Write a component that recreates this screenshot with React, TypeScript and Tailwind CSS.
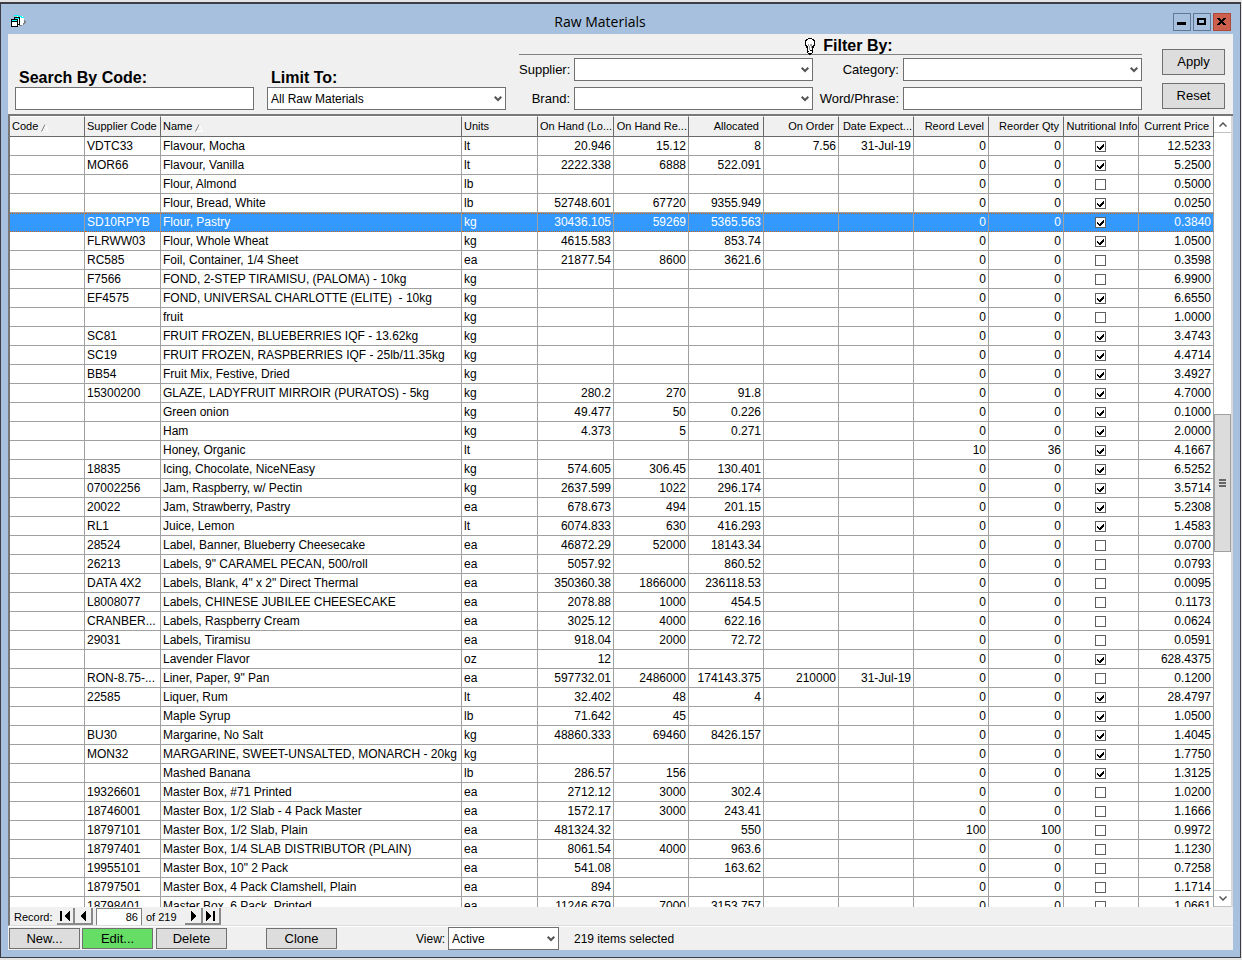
/**
 * @file Raw Materials — inventory browser window with search, filters,
 * a record grid and record actions.
 */

import { useState, type ReactNode } from "react";
import clsx from "clsx";

interface Material {
  supplierCode: string;
  name: string;
  units: string;
  onHandLo: string;
  onHandRe: string;
  allocated: string;
  onOrder: string;
  expected: string;
  level: string;
  qty: string;
  nutrition: boolean;
  price: string;
}

// supplier code | name | units | on hand | on hand re | allocated | on order | expected | level | qty | nutrition | price
const SOURCE = `VDTC33|Flavour, Mocha|lt|20.946|15.12|8|7.56|31-Jul-19|0|0|1|12.5233
MOR66|Flavour, Vanilla|lt|2222.338|6888|522.091|||0|0|1|5.2500
|Flour, Almond|lb||||||0|0|0|0.5000
|Flour, Bread, White|lb|52748.601|67720|9355.949|||0|0|1|0.0250
SD10RPYB|Flour, Pastry|kg|30436.105|59269|5365.563|||0|0|1|0.3840
FLRWW03|Flour, Whole Wheat|kg|4615.583||853.74|||0|0|1|1.0500
RC585|Foil, Container, 1/4 Sheet|ea|21877.54|8600|3621.6|||0|0|0|0.3598
F7566|FOND, 2-STEP TIRAMISU, (PALOMA) - 10kg|kg||||||0|0|0|6.9900
EF4575|FOND, UNIVERSAL CHARLOTTE (ELITE)  - 10kg|kg||||||0|0|1|6.6550
|fruit|kg||||||0|0|0|1.0000
SC81|FRUIT FROZEN, BLUEBERRIES IQF - 13.62kg|kg||||||0|0|1|3.4743
SC19|FRUIT FROZEN, RASPBERRIES IQF - 25lb/11.35kg|kg||||||0|0|1|4.4714
BB54|Fruit Mix, Festive, Dried|kg||||||0|0|1|3.4927
15300200|GLAZE, LADYFRUIT MIRROIR (PURATOS) - 5kg|kg|280.2|270|91.8|||0|0|1|4.7000
|Green onion|kg|49.477|50|0.226|||0|0|1|0.1000
|Ham|kg|4.373|5|0.271|||0|0|1|2.0000
|Honey, Organic|lt||||||10|36|1|4.1667
18835|Icing, Chocolate, NiceNEasy|kg|574.605|306.45|130.401|||0|0|1|6.5252
07002256|Jam, Raspberry, w/ Pectin|kg|2637.599|1022|296.174|||0|0|1|3.5714
20022|Jam, Strawberry, Pastry|ea|678.673|494|201.15|||0|0|1|5.2308
RL1|Juice, Lemon|lt|6074.833|630|416.293|||0|0|1|1.4583
28524|Label, Banner, Blueberry Cheesecake|ea|46872.29|52000|18143.34|||0|0|0|0.0700
26213|Labels, 9" CARAMEL PECAN, 500/roll|ea|5057.92||860.52|||0|0|0|0.0793
DATA 4X2|Labels, Blank, 4" x 2" Direct Thermal|ea|350360.38|1866000|236118.53|||0|0|0|0.0095
L8008077|Labels, CHINESE JUBILEE CHEESECAKE|ea|2078.88|1000|454.5|||0|0|0|0.1173
CRANBER...|Labels, Raspberry Cream|ea|3025.12|4000|622.16|||0|0|0|0.0624
29031|Labels, Tiramisu|ea|918.04|2000|72.72|||0|0|0|0.0591
|Lavender Flavor|oz|12|||||0|0|1|628.4375
RON-8.75-...|Liner, Paper, 9" Pan|ea|597732.01|2486000|174143.375|210000|31-Jul-19|0|0|0|0.1200
22585|Liquer, Rum|lt|32.402|48|4|||0|0|1|28.4797
|Maple Syrup|lb|71.642|45||||0|0|1|1.0500
BU30|Margarine, No Salt|kg|48860.333|69460|8426.157|||0|0|1|1.4045
MON32|MARGARINE, SWEET-UNSALTED, MONARCH - 20kg|kg||||||0|0|1|1.7750
|Mashed Banana|lb|286.57|156||||0|0|1|1.3125
19326601|Master Box, #71 Printed|ea|2712.12|3000|302.4|||0|0|0|1.0200
18746001|Master Box, 1/2 Slab - 4 Pack Master|ea|1572.17|3000|243.41|||0|0|0|1.1666
18797101|Master Box, 1/2 Slab, Plain|ea|481324.32||550|||100|100|0|0.9972
18797401|Master Box, 1/4 SLAB DISTRIBUTOR (PLAIN)|ea|8061.54|4000|963.6|||0|0|0|1.1230
19955101|Master Box, 10" 2 Pack|ea|541.08||163.62|||0|0|0|0.7258
18797501|Master Box, 4 Pack Clamshell, Plain|ea|894|||||0|0|0|1.1714
18798401|Master Box, 6 Pack, Printed|ea|11246.679|7000|3153.757|||0|0|0|1.0661`;

const MATERIALS: Material[] = SOURCE.split("\n").map((line) => {
  const f = line.split("|");
  return {
    supplierCode: f[0],
    name: f[1],
    units: f[2],
    onHandLo: f[3],
    onHandRe: f[4],
    allocated: f[5],
    onOrder: f[6],
    expected: f[7],
    level: f[8],
    qty: f[9],
    nutrition: f[10] === "1",
    price: f[11],
  };
});

const COLUMNS = [
  { title: "Code", width: "w-[75px]", align: "text-left", sorted: true },
  { title: "Supplier Code", width: "w-[76px]", align: "text-left" },
  { title: "Name", width: "", align: "text-left", sorted: true },
  { title: "Units", width: "w-[76px]", align: "text-left" },
  { title: "On Hand (Lo...", width: "w-[76px]", align: "text-right", cut: true },
  { title: "On Hand Re...", width: "w-[75px]", align: "text-right", cut: true },
  { title: "Allocated", width: "w-[75px]", align: "text-right" },
  { title: "On Order", width: "w-[75px]", align: "text-right" },
  { title: "Date Expect...", width: "w-[75px]", align: "text-right", cut: true },
  { title: "Reord Level", width: "w-[75px]", align: "text-right" },
  { title: "Reorder Qty", width: "w-[75px]", align: "text-right" },
  { title: "Nutritional Info", width: "w-[75px]", align: "text-center" },
  { title: "Current Price", width: "w-[75px]", align: "text-right" },
];

function AppIcon() {
  return (
    <svg width="16" height="14" viewBox="0 0 16 14" shapeRendering="crispEdges">
      <path d="M6 1h6v1h1v8H9v1H7z" fill="#fff" />
      <path d="M3 0h5v1H3zM7 1h4v1H7zM10 2h3v1h-3z" fill="#0ff" />
      <path d="M8 10h3v1H8zM12 8h1v2h-1zM13 5h1v4h-1zM14 6h1v2h-1z" fill="#808080" />
      <path d="M3 2h6v8H3z" fill="#000" />
      <path d="M4 4h4v5H4z" fill="#fff" />
      <path d="M4 3h4v1H4z" fill="#0ff" />
      <path d="M0 4h7v8H0z" fill="#000" />
      <path d="M1 6h5v5H1z" fill="#fff" />
      <path d="M1 5h5v1H1z" fill="#0ff" />
      <path d="M1 6h5v1H1z" fill="#000" />
    </svg>
  );
}

function BulbIcon() {
  return (
    <svg width="10" height="17" viewBox="0 0 10 17" shapeRendering="crispEdges">
      <path d="M3 1h4v1h1v1h1v5H8v2H7v5H3v-5H2V8H1V3h1V2h1z" fill="#fff" />
      <path
        d="M3 0h4v1H3zM1 1h2v1H1zM7 1h2v1H7zM0 2h2v1H0zM8 2h2v1H8zM0 3h1v4H0zM9 3h1v4H9zM0 7h2v1H0zM8 7h2v1H8zM1 8h1v1H1zM8 8h1v1H8zM2 9h1v6H2zM7 9h1v6H7zM1 8h2v2H1zM7 8h2v2H7zM3 15h4v1H3zM4 16h2v1H4zM3 13h1v1H3zM5 12h2v1H5z"
        fill="#000"
      />
      <path d="M3 6h1v2H3zM4 8h1v4H4zM5 6h1v2H5zM6 6h1v4H6z" fill="#999" />
    </svg>
  );
}

function Chevron() {
  return (
    <svg
      className="pointer-events-none col-start-1 row-start-1 mr-1 justify-self-end"
      width="8"
      height="6"
      viewBox="0 0 8 6"
      fill="none"
      stroke="#555"
      strokeWidth="2"
    >
      <path d="M.7.7 4 4 7.300.7" />
    </svg>
  );
}

interface DropDownProps {
  id: string;
  options: string[];
  className?: string;
}

function DropDown({ id, options, className }: DropDownProps) {
  return (
    <div className={clsx("grid min-w-0 items-center", className)}>
      <select
        id={id}
        className="col-start-1 row-start-1 h-[23px] w-full min-w-0 appearance-none border border-[#707070] bg-white pr-4 pl-[3px] text-[12px]"
      >
        {options.map((o) => (
          <option key={o}>{o}</option>
        ))}
      </select>
      <Chevron />
    </div>
  );
}

function PushButton({ children, className }: { children: ReactNode; className?: string }) {
  return (
    <button
      type="button"
      className={clsx("border border-[#707070] text-[13px] leading-none", className)}
    >
      {children}
    </button>
  );
}

function WindowButton({ label, className, children }: { label: string; className: string; children: ReactNode }) {
  return (
    <button
      type="button"
      aria-label={label}
      className={clsx("grid size-[18px] place-items-center border", className)}
    >
      <svg width="12" height="12" viewBox="0 0 12 12" shapeRendering="crispEdges">
        {children}
      </svg>
    </button>
  );
}

function NavButton({ label, path }: { label: string; path: string }) {
  return (
    <button
      type="button"
      aria-label={label}
      className="grid h-[17px] w-[18px] place-items-center border-r-2 border-b-2 border-r-[#8a8a8a] border-b-[#8a8a8a] bg-[#f0f0f0]"
    >
      <svg width="12" height="10" viewBox="0 0 12 10" shapeRendering="crispEdges">
        <path d={path} />
      </svg>
    </button>
  );
}

function TitleBar() {
  return (
    <header className="flex h-[30px] shrink-0 items-center pt-[6px] pr-[2px] pl-[3px]">
      <AppIcon />
      <h1 className="flex-1 text-center font-['Open_Sans',sans-serif] text-[14px] leading-[18px]">
        Raw Materials
      </h1>
      <div className="flex gap-[2px]">
        <WindowButton label="Minimize" className="border-[#5f7896] bg-[#a7c0dd]">
          <path d="M1 6h9v3H1z" />
        </WindowButton>
        <WindowButton label="Maximize" className="border-[#5f7896] bg-[#a7c0dd]">
          <path d="M1 2h9v7H1zM3 4v3h5V4z" fillRule="evenodd" />
        </WindowButton>
        <WindowButton label="Close" className="border-[#b04a38] bg-[#cd604d]">
          <path d="M1 2h3v1h1v1h1V3h1V2h3v1H9v1H8v1H7v1h1v1h1v1h1v1H7V8H6V7H5v1H4v1H1V8h1V7h1V6h1V5H3V4H2V3H1z" />
        </WindowButton>
      </div>
    </header>
  );
}

function FilterBar() {
  return (
    <div className="grid shrink-0 grid-cols-[239fr_239fr_623fr_70px] items-end gap-x-[13px] pt-1 pr-2 pb-1 pl-[7px]">
      <div>
        <label htmlFor="search" className="block pl-1 text-[16px] leading-[18px] font-bold">
          Search By Code:
        </label>
        <input id="search" className="block h-[23px] w-full border border-[#707070] bg-white px-1 text-[12px]" />
      </div>
      <div>
        <label htmlFor="limit" className="block pl-1 text-[16px] leading-[18px] font-bold">
          Limit To:
        </label>
        <DropDown id="limit" options={["All Raw Materials"]} />
      </div>
      <fieldset className="min-w-0">
        <div className="mb-[3px] flex h-[17px] items-center justify-center gap-2 border-b border-[#808080] pl-[37px]">
          <BulbIcon />
          <h2 className="text-[16px] leading-4 font-bold">Filter By:</h2>
        </div>
        <div className="grid grid-cols-[51px_1fr_82px_1fr] items-center gap-x-1 gap-y-[6px] text-[13px]">
          <label htmlFor="supplier" className="text-right">Supplier:</label>
          <DropDown id="supplier" options={[""]} />
          <label htmlFor="category" className="text-right">Category:</label>
          <DropDown id="category" options={[""]} />
          <label htmlFor="brand" className="text-right">Brand:</label>
          <DropDown id="brand" options={[""]} />
          <label htmlFor="phrase" className="text-right">Word/Phrase:</label>
          <input id="phrase" className="h-[23px] w-full min-w-0 border border-[#707070] bg-white px-1 text-[12px]" />
        </div>
      </fieldset>
      <div className="mb-px flex flex-col gap-2 pl-[7px]">
        <PushButton className="h-[26px] bg-[#ddd] pb-[2px]">Apply</PushButton>
        <PushButton className="h-[26px] bg-[#ddd] pb-[2px]">Reset</PushButton>
      </div>
    </div>
  );
}

function CheckCell({ checked, labelledBy }: { checked: boolean; labelledBy: string }) {
  return (
    <span className="grid place-items-center">
      <input
        type="checkbox"
        checked={checked}
        readOnly
        aria-labelledby={labelledBy}
        className="col-start-1 row-start-1 size-[11px] appearance-none border border-[#606060] bg-white"
      />
      {checked && (
        <svg
          className="pointer-events-none col-start-1 row-start-1"
          width="11"
          height="11"
          viewBox="0 0 11 11"
          shapeRendering="crispEdges"
        >
          <path d="M2 5h1v1h1v1h1V6h1V5h1V4h1V3h1v3H8v1H7v1H6v1H4V8H3V7H2z" />
        </svg>
      )}
    </span>
  );
}

function MaterialRow({ item, index, selected, onSelect }: { item: Material; index: number; selected: boolean; onSelect: () => void }) {
  const cell = clsx(
    "h-[19px] overflow-hidden border-r border-b border-r-[#a0a0a0] px-[2px] py-0",
    selected
      ? "border-t border-t-[#c86414] border-b-[#c86414] [border-bottom-style:dotted] [border-top-style:dotted] leading-[13px]"
      : "border-b-[#a0a0a0]",
  );
  const numbers = [item.onHandLo, item.onHandRe, item.allocated, item.onOrder, item.expected, item.level, item.qty];

  return (
    <tr onClick={onSelect} className={clsx(selected && "bg-[#3399ff] text-white")}>
      <td className={cell} />
      <td className={cell}>{item.supplierCode}</td>
      <td id={`name-${index}`} className={cell}>{item.name}</td>
      <td className={cell}>{item.units}</td>
      {numbers.map((n, i) => (
        <td key={i} className={clsx(cell, "text-right")}>{n}</td>
      ))}
      <td className={clsx(cell, "pr-[3px]")}>
        <CheckCell checked={item.nutrition} labelledBy={`name-${index}`} />
      </td>
      <td className={clsx(cell, "text-right")}>{item.price}</td>
    </tr>
  );
}

function ScrollBar() {
  return (
    <div className="flex w-[19px] shrink-0 flex-col border-r-2 border-[#d8d8d8] bg-white">
      <button type="button" aria-label="Scroll up" className="grid h-[17px] place-items-center border-b border-[#c0c0c0]">
        <svg width="8" height="5" viewBox="0 0 8 5" fill="none" stroke="#555" strokeWidth="1.500">
          <path d="M.5 4.500 4 1l3.500 3.500" />
        </svg>
      </button>
      <div className="grow-[281] basis-0" />
      <div className="grid h-[138px] place-items-center border border-[#a0a0a0] bg-[#dcdcdc]">
        <svg width="7" height="8" viewBox="0 0 7 8" shapeRendering="crispEdges">
          <path d="M0 0h7v2H0zM0 3h7v2H0zM0 6h7v2H0z" fill="#666" />
        </svg>
      </div>
      <div className="grow-[338] basis-0" />
      <button type="button" aria-label="Scroll down" className="grid h-[17px] place-items-center border-y border-[#c0c0c0]">
        <svg width="8" height="5" viewBox="0 0 8 5" fill="none" stroke="#555" strokeWidth="1.500">
          <path d="M.5.5 4 4 7.500.5" />
        </svg>
      </button>
    </div>
  );
}

function RecordGrid() {
  const [selected, setSelected] = useState(4);

  return (
    <div className="flex min-h-0 flex-1 border-t-2 border-l-2 border-[#787878]">
      <div className="min-w-0 flex-1 overflow-hidden bg-white">
        <table className="w-full table-fixed border-separate border-spacing-0 text-[12px] leading-[14px] whitespace-pre">
          <colgroup>
            {COLUMNS.map((c) => (
              <col key={c.title} className={c.width} />
            ))}
          </colgroup>
          <thead>
            <tr>
              {COLUMNS.map((c) => (
                <th
                  key={c.title}
                  className={clsx(
                    "h-[21px] overflow-hidden border-t border-r border-b border-t-white border-r-[#696969] border-b-[#696969] bg-[#f0f0f0] pt-0 pb-[2px] pl-[2px] text-[11px] font-normal",
                    c.align,
                    c.cut ? "pr-px" : c.align === "text-right" ? "pr-1" : "pr-0",
                  )}
                >
                  {c.title}
                  {c.sorted && (
                    <svg className="ml-[3px] inline align-[-2px]" width="8" height="8" viewBox="0 0 8 8" fill="none">
                      <path d="M4 .5 7.500 7.500H1" stroke="#fff" />
                      <path d="M.5 7.500 4 .5" stroke="#808080" />
                    </svg>
                  )}
                </th>
              ))}
            </tr>
          </thead>
          <tbody>
            {MATERIALS.map((m, i) => (
              <MaterialRow key={m.name} item={m} index={i} selected={i === selected} onSelect={() => setSelected(i)} />
            ))}
          </tbody>
        </table>
      </div>
      <ScrollBar />
    </div>
  );
}

function RecordNavigator() {
  return (
    <div className="flex h-[19px] shrink-0 items-start border-b border-l-2 border-b-[#dcdcdc] border-l-[#787878] pt-px pl-1 text-[11px] leading-[19px]">
      <label htmlFor="record" className="w-[43px]">Record:</label>
      <NavButton label="First record" path="M1 0h2v10H1zM10 0h1v10h-1V9H9V8H8V7H7V6H6V4h1V3h1V2h1V1h1z" />
      <NavButton label="Previous record" path="M8 0h1v10H8V9H7V8H6V7H5V6H4V4h1V3h1V2h1V1h1z" />
      <input
        id="record"
        defaultValue="86"
        className="ml-[3px] h-[17px] w-[46px] border-t border-r border-l border-[#808080] bg-white px-[3px] text-right"
      />
      <span className="w-[43px] pl-1">of 219</span>
      <NavButton label="Next record" path="M4 0h1v1h1v1h1v1h1v1h1v2H8v1H7v1H6v1H5v1H4z" />
      <NavButton label="Last record" path="M1 0h1v1h1v1h1v1h1v1h1v2H5v1H4v1H3v1H2v1H1zM8 0h2v10H8z" />
    </div>
  );
}

function ActionBar() {
  return (
    <footer className="flex shrink-0 items-center pl-px text-[12px]">
      <PushButton className="h-[21px] w-[71px] bg-[#ddd]">New...</PushButton>
      <PushButton className="ml-[2px] h-[21px] w-[71px] bg-[#66de66]">Edit...</PushButton>
      <PushButton className="ml-[3px] h-[21px] w-[71px] bg-[#ddd]">Delete</PushButton>
      <PushButton className="ml-[39px] h-[21px] w-[71px] bg-[#ddd]">Clone</PushButton>
      <label htmlFor="view" className="ml-[79px] w-[32px]">View:</label>
      <DropDown id="view" options={["Active"]} className="w-[111px]" />
      <span className="ml-[15px]">219 items selected</span>
    </footer>
  );
}

export default function App() {
  return (
    <div className="flex h-screen flex-col border-t-2 border-[#e4e4e4] bg-[#e4e4e4] pr-px pb-[2px] font-['Liberation_Sans',Arial,sans-serif] text-black">
      <div className="flex min-h-0 flex-1 flex-col border border-t-2 border-[#3c3c44] bg-[#a7c0dd] px-[7px] pb-[7px]">
        <TitleBar />
        <main className="flex min-h-0 flex-1 flex-col bg-[#f0f0f0]">
          <FilterBar />
          <RecordGrid />
          <RecordNavigator />
          <div className="h-px shrink-0 bg-white" />
          <ActionBar />
        </main>
      </div>
    </div>
  );
}
